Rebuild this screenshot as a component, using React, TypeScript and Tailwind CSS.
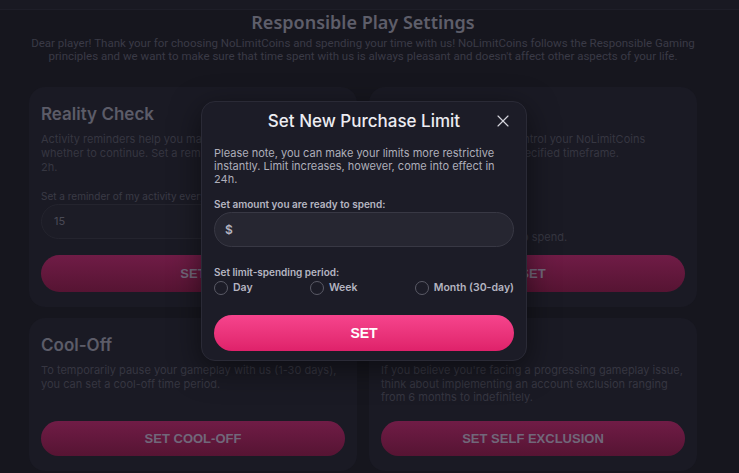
import { X } from "lucide-react";

const sans = "font-['Inter','Noto_Sans',sans-serif]";

function DimButton({ label, tall }: { label: string; tall?: boolean }) {
  return (
    <button
      className={`w-full ${tall ? "h-[37px]" : "h-[35px]"} rounded-full bg-gradient-to-b from-[#701c46] to-[#561433] text-[13px] font-bold text-[#71677a] font-['Liberation_Sans',sans-serif]`}
    >
      {label}
    </button>
  );
}

function Card({ title, children, button }: { title: string; children: React.ReactNode; button: string }) {
  return (
    <div className="flex h-full flex-col rounded-2xl bg-[#1a1a24] px-3 pt-4 pb-[15px]">
      <h2 className="text-[17px] font-semibold leading-[22px] text-[#5c5c68]">{title}</h2>
      <div className="mt-[8px] flex-1 text-[11px] leading-[13.5px] text-[#363641]">{children}</div>
      <DimButton label={button} />
    </div>
  );
}

function Radio({ label }: { label: string }) {
  return (
    <label className="flex h-4 items-center gap-[5px]">
      <span className="h-[14px] w-[14px] rounded-full border border-[#5a5a66]" />
      <span className="text-[10.5px] font-semibold text-[#b4b4c0]">{label}</span>
    </label>
  );
}

export default function App() {
  return (
    <div className={`relative h-[473px] w-[739px] overflow-hidden bg-[#16161e] ${sans}`}>
      <div className="h-[10px] border-b border-[#1e1e28] bg-[#191922]" />
      <div className="mx-[29px] w-[668px]">
        <h1 className="mt-px text-center text-[18px] font-semibold leading-[22px] text-[#5e5e6a] font-['Noto_Sans',sans-serif]">
          Responsible Play Settings
        </h1>
        <p className="mt-[4px] text-center text-[11.5px] leading-[13px] text-[#3a3a46] font-['Roboto',sans-serif]">
          Dear player! Thank your for choosing NoLimitCoins and spending your time with us! NoLimitCoins follows the Responsible Gaming
          <br />
          principles and we want to make sure that time spent with us is always pleasant and doesn't affect other aspects of your life.
        </p>

        <div className="mt-[24px] grid grid-cols-2 gap-x-3 gap-y-[11px]">
          <div className="h-[220px]">
            <div className="flex h-full flex-col rounded-2xl bg-[#1a1a24] px-3 pt-4 pb-[15px]">
              <h2 className="text-[17px] font-semibold leading-[22px] text-[#5c5c68]">Reality Check</h2>
              <p className="mt-[7px] whitespace-nowrap text-[11px] leading-[14px] text-[#363641]">
                Activity reminders help you make informed decisions about
                <br />
                whether to continue. Set a reminder for 15min, 30min, 1h or
                <br />
                2h.
              </p>
              <p className="mt-[16px] text-[10px] leading-[12px] text-[#3a3a46]">Set a reminder of my activity every:</p>
              <div className="mt-[2px] flex h-[35px] items-center rounded-full border border-[#24242e] bg-[#1c1c26] px-3 text-[11px] text-[#4a4a56]">
                15
              </div>
              <div className="mt-auto">
                <DimButton label="SET" tall />
              </div>
            </div>
          </div>
          <div className="h-[220px]">
            <div className="flex h-full flex-col rounded-2xl bg-[#1a1a24] px-3 pt-4 pb-[15px]">
              <h2 className="text-[17px] font-semibold leading-[22px] text-[#5c5c68]">Purchase Limit</h2>
              <p className="mt-[7px] whitespace-nowrap text-[11px] leading-[14px] text-[#363641]">
                Purchase limits help you control your NoLimitCoins
                <br />
                purchase amounts in the specified timeframe.
              </p>
              <p className="mt-[70px] text-[11px] leading-[14px] text-[#363641]">Choose the limit you want to spend.</p>
              <div className="mt-auto">
                <DimButton label="SET" tall />
              </div>
            </div>
          </div>
          <div className="h-[153px]">
            <Card title="Cool-Off" button="SET COOL-OFF">
              <p>To temporarily pause your gameplay with us (1-30 days), you can set a cool-off time period.</p>
            </Card>
          </div>
          <div className="h-[153px]">
            <Card title="Self Exclusion" button="SET SELF EXCLUSION">
              <p>If you believe you're facing a progressing gameplay issue, think about implementing an account exclusion ranging from 6 months to indefinitely.</p>
            </Card>
          </div>
        </div>
      </div>

      <div className="absolute left-[201px] top-[101px] w-[326px] rounded-[14px] border border-[#2a2a36] bg-[#1c1c27] px-3 pt-2 pb-[9px] shadow-[0_8px_30px_rgba(0,0,0,0.5)]">
        <div className="relative flex items-center justify-center">
          <h3 className="text-[17px] font-medium leading-[22px] text-[#ececf2]">Set New Purchase Limit</h3>
          <X className="absolute right-[1px] top-[1px] h-[20px] w-[20px] text-[#d4d4dc]" strokeWidth={1.4} />
        </div>
        <p className="mt-[15px] text-[11px] leading-[13px] text-[#aeaeba]">
          Please note, you can make your limits more restrictive instantly. Limit increases, however, come into effect in 24h.
        </p>
        <p className="mt-[12px] text-[10px] font-semibold leading-[12px] text-[#b6b6c2]">Set amount you are ready to spend:</p>
        <div className="mt-[2px] flex h-[35px] items-center rounded-full border border-[#383844] bg-[#262631] px-[10px] text-[12px] font-semibold text-[#b4b4c0]">
          $
        </div>
        <p className="mt-[19px] text-[10px] font-semibold leading-[12px] text-[#b6b6c2]">Set limit-spending period:</p>
        <div className="mt-[2px] flex items-center justify-between">
          <Radio label="Day" />
          <Radio label="Week" />
          <Radio label="Month (30-day)" />
        </div>
        <button className="mt-[19px] h-[36px] w-full rounded-full bg-gradient-to-b from-[#f6448d] to-[#df216a] text-[14px] font-bold text-white font-['Liberation_Sans',sans-serif]">
          SET
        </button>
      </div>
    </div>
  );
}
